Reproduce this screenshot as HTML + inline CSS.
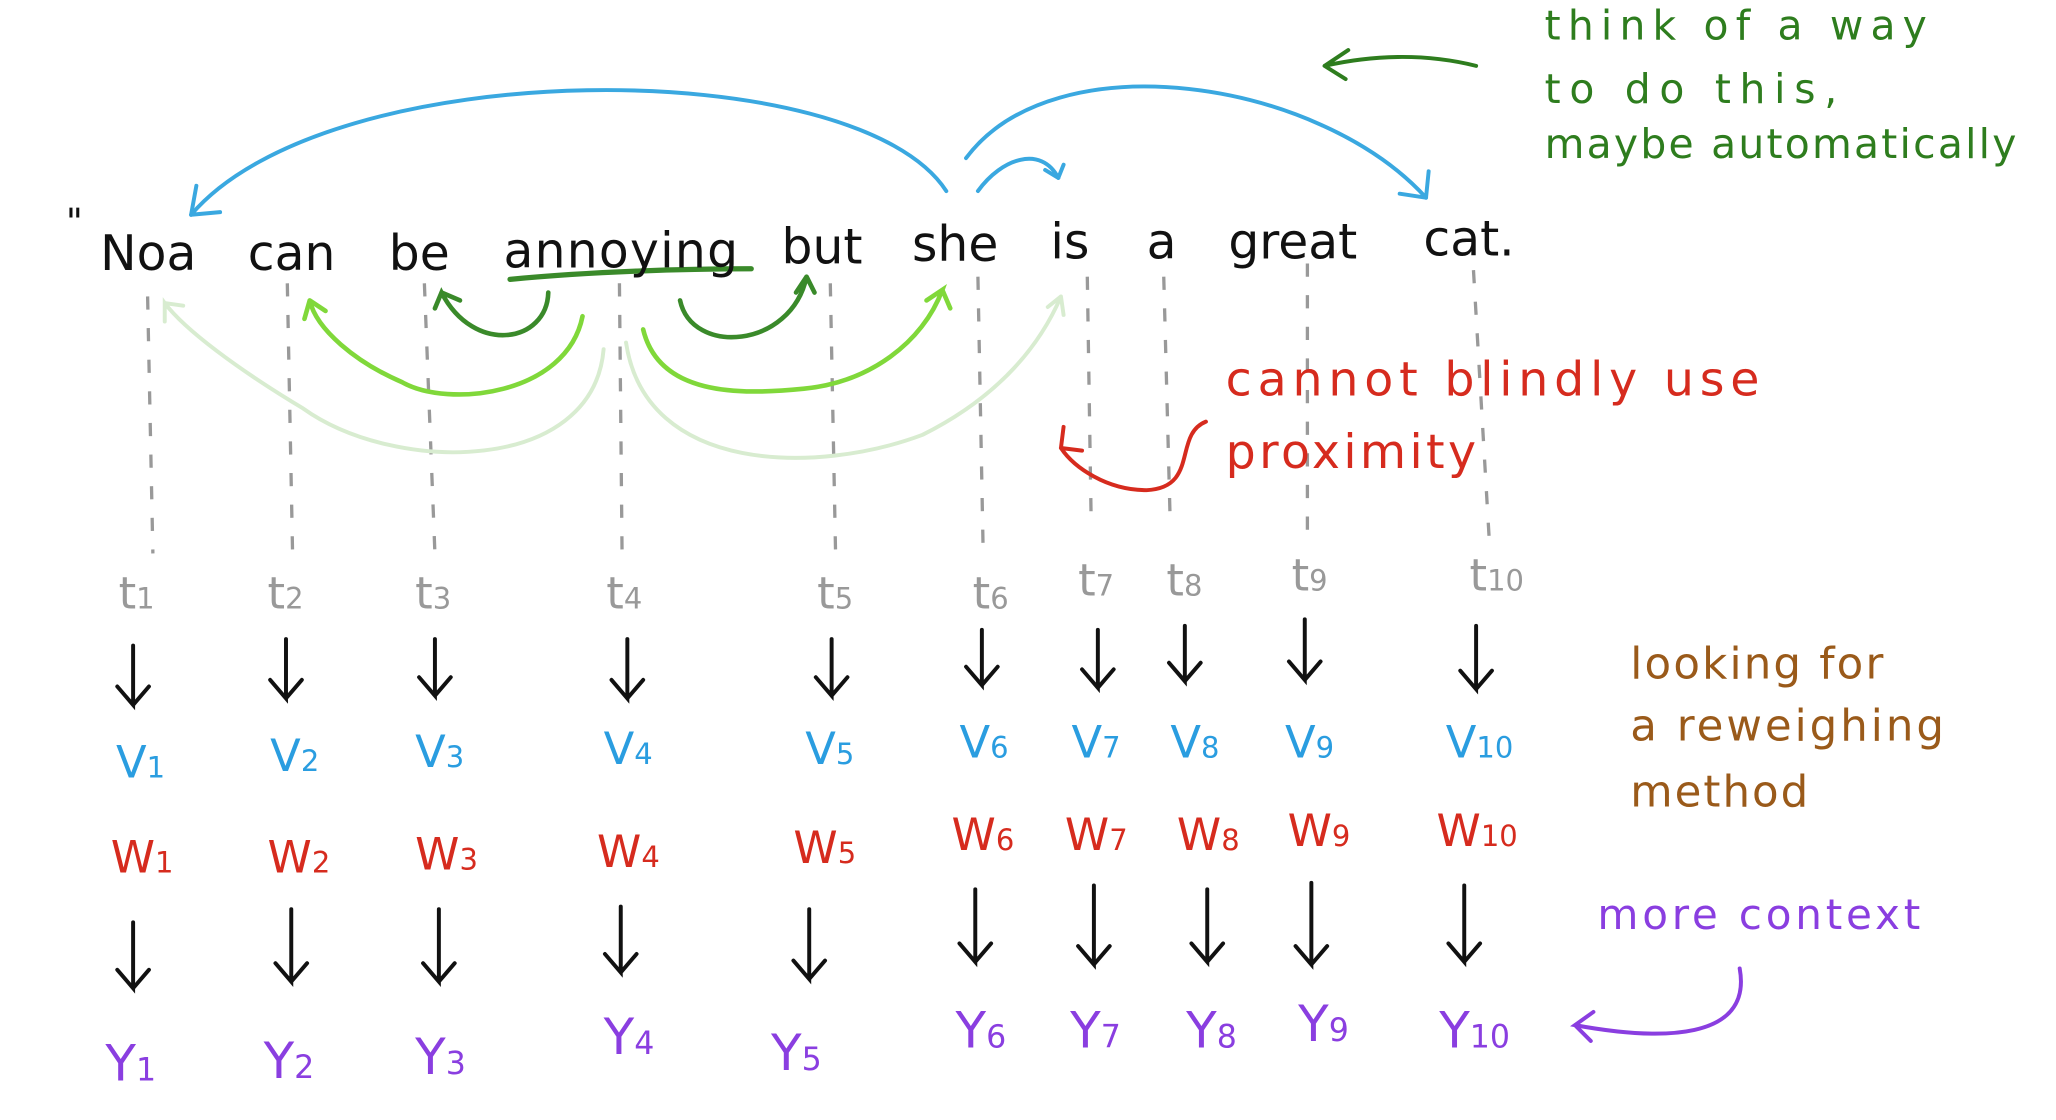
<!DOCTYPE html>
<html><head><meta charset="utf-8"><style>
html,body{margin:0;padding:0;background:#fff;width:2056px;height:1120px;overflow:hidden}
svg{display:block}
text{font-family:"DejaVu Sans","Liberation Sans",sans-serif}
</style></head><body>
<svg width="2056" height="1120" viewBox="0 0 1560 850" preserveAspectRatio="none" xmlns="http://www.w3.org/2000/svg">
<rect width="1560" height="850" fill="#fff"/>
<g stroke="#999" stroke-width="2.5" stroke-dasharray="10 14" fill="none">
<line x1="112" y1="225" x2="116" y2="420"/>
<line x1="218" y1="215" x2="222" y2="420"/>
<line x1="322" y1="215" x2="330" y2="420"/>
<line x1="470" y1="215" x2="472" y2="420"/>
<line x1="630" y1="215" x2="634" y2="420"/>
<line x1="742" y1="210" x2="746" y2="420"/>
<line x1="825" y1="210" x2="828" y2="400"/>
<line x1="883" y1="210" x2="888" y2="400"/>
<line x1="992" y1="200" x2="992" y2="410"/>
<line x1="1118" y1="205" x2="1130" y2="410"/>
</g>
<g stroke="#3aa8e0" stroke-width="3" fill="none" stroke-linecap="round">
<path d="M718 145 C650 40 250 40 145 163"/><path d="M145 163 l22 -2 M145 163 l4 -22"/>
<path d="M733 120 C800 30 1000 60 1082 150"/><path d="M1082 150 l-20 -3 M1082 150 l2 -20"/>
<path d="M742 145 C760 120 790 110 803 135"/><path d="M803 135 l-10 -6 M803 135 l4 -10"/>
</g>
<g stroke="#2e7d1e" stroke-width="3" fill="none" stroke-linecap="round">
<path d="M1120 50 C1080 40 1040 42 1005 50 l18 -12 M1005 50 l16 10"/>
</g>
<g fill="none" stroke-linecap="round">
<path d="M387 212 C450 206 520 204 570 204" stroke="#3a8a2a" stroke-width="4"/>
<path d="M416 222 C415 260 360 270 335 222 l-5 12 M335 222 l14 6" stroke="#3a8a2a" stroke-width="3.5"/>
<path d="M516 228 C525 270 600 265 612 210 l-8 12 M612 210 l6 12" stroke="#3a8a2a" stroke-width="3.5"/>
<path d="M442 240 C430 300 340 310 305 290 C270 275 240 250 235 228 l-4 14 M235 228 l12 8" stroke="#80d83a" stroke-width="3.5"/>
<path d="M488 250 C500 300 560 300 610 295 C660 290 700 260 715 220 l-12 8 M715 220 l6 14" stroke="#80d83a" stroke-width="3.5"/>
<path d="M458 265 C450 360 300 360 230 310 C180 280 140 250 125 230 l0 14 M125 230 l14 2" stroke="#d8ecd0" stroke-width="3"/>
<path d="M475 260 C490 360 620 360 700 330 C760 300 790 260 805 225 l-10 8 M805 225 l2 14" stroke="#d8ecd0" stroke-width="3"/>
</g>
<path d="M915 320 C890 330 910 370 870 372 C840 372 815 355 805 340 M805 340 l2 -16 M805 340 l16 2" stroke="#d62b1e" stroke-width="3" fill="none" stroke-linecap="round"/>
<path d="M1320 735 C1330 790 1260 790 1195 778 l14 -10 M1195 778 l12 12" stroke="#8a3ee0" stroke-width="3" fill="none" stroke-linecap="round"/>
<g font-size="37" fill="#111">
<text x="50" y="178" font-size="28">"</text>
<text x="76" y="205">Noa</text><text x="188" y="205">can</text><text x="295" y="205">be</text>
<text x="382" y="203" textLength="178">annoying</text><text x="593" y="200">but</text><text x="692" y="198">she</text>
<text x="797" y="196">is</text><text x="870" y="196">a</text><text x="932" y="196">great</text><text x="1080" y="194">cat.</text>
</g>
<g font-size="31" fill="#2e7d1e">
<text x="1172" y="30" textLength="290">think  of  a  way</text><text x="1172" y="78" textLength="222">to  do  this,</text><text x="1172" y="120" textLength="358">maybe automatically</text>
</g>
<g font-size="36" fill="#d62b1e"><text x="930" y="300" textLength="405">cannot  blindly  use</text><text x="930" y="355" textLength="190">proximity</text></g>
<g font-size="33" fill="#9a5a1a"><text x="1237" y="515" textLength="192">looking  for</text><text x="1237" y="562" textLength="238">a  reweighing</text><text x="1237" y="612" textLength="135">method</text></g>
<text x="1212" y="705" font-size="32" fill="#8a3ee0" textLength="245">more  context</text>
<g font-size="34" fill="#999">
<text x="90" y="462">t<tspan font-size="22">1</tspan></text><text x="203" y="462">t<tspan font-size="22">2</tspan></text>
<text x="315" y="462">t<tspan font-size="22">3</tspan></text><text x="460" y="462">t<tspan font-size="22">4</tspan></text>
<text x="620" y="462">t<tspan font-size="22">5</tspan></text><text x="738" y="462">t<tspan font-size="22">6</tspan></text>
<text x="818" y="452">t<tspan font-size="22">7</tspan></text><text x="885" y="452">t<tspan font-size="22">8</tspan></text>
<text x="980" y="448">t<tspan font-size="22">9</tspan></text><text x="1115" y="448">t<tspan font-size="22">10</tspan></text>
</g>
<g stroke="#111" stroke-width="3" fill="none" stroke-linecap="round">
<path d="M101 490 v45 l-12 -14 M101 535 l12 -14"/><path d="M217 485 v45 l-12 -14 M217 530 l12 -14"/>
<path d="M330 485 v43 l-12 -14 M330 528 l12 -14"/><path d="M476 485 v45 l-12 -14 M476 530 l12 -14"/>
<path d="M631 485 v43 l-12 -14 M631 528 l12 -14"/><path d="M745 478 v42 l-12 -14 M745 520 l12 -14"/>
<path d="M833 478 v44 l-12 -14 M833 522 l12 -14"/><path d="M899 475 v42 l-12 -14 M899 517 l12 -14"/>
<path d="M990 470 v46 l-12 -14 M990 516 l12 -14"/><path d="M1120 475 v48 l-12 -14 M1120 523 l12 -14"/>
<path d="M101 700 v50 l-12 -14 M101 750 l12 -14"/><path d="M221 690 v55 l-12 -14 M221 745 l12 -14"/>
<path d="M333 690 v55 l-12 -14 M333 745 l12 -14"/><path d="M471 688 v50 l-12 -14 M471 738 l12 -14"/>
<path d="M614 690 v53 l-12 -14 M614 743 l12 -14"/><path d="M740 675 v55 l-12 -14 M740 730 l12 -14"/>
<path d="M830 672 v60 l-12 -14 M830 732 l12 -14"/><path d="M916 675 v55 l-12 -14 M916 730 l12 -14"/>
<path d="M995 670 v62 l-12 -14 M995 732 l12 -14"/><path d="M1111 672 v58 l-12 -14 M1111 730 l12 -14"/>
</g>
<g font-size="34" fill="#2a9de0">
<text x="88" y="590">V<tspan font-size="22">1</tspan></text><text x="205" y="585">V<tspan font-size="22">2</tspan></text>
<text x="315" y="582">V<tspan font-size="22">3</tspan></text><text x="458" y="580">V<tspan font-size="22">4</tspan></text>
<text x="611" y="580">V<tspan font-size="22">5</tspan></text><text x="728" y="575">V<tspan font-size="22">6</tspan></text>
<text x="813" y="575">V<tspan font-size="22">7</tspan></text><text x="888" y="575">V<tspan font-size="22">8</tspan></text>
<text x="975" y="575">V<tspan font-size="22">9</tspan></text><text x="1097" y="575">V<tspan font-size="22">10</tspan></text>
</g>
<g font-size="34" fill="#d62b1e">
<text x="84" y="662">W<tspan font-size="22">1</tspan></text><text x="203" y="662">W<tspan font-size="22">2</tspan></text>
<text x="315" y="660">W<tspan font-size="22">3</tspan></text><text x="453" y="658">W<tspan font-size="22">4</tspan></text>
<text x="602" y="655">W<tspan font-size="22">5</tspan></text><text x="722" y="645">W<tspan font-size="22">6</tspan></text>
<text x="808" y="645">W<tspan font-size="22">7</tspan></text><text x="893" y="645">W<tspan font-size="22">8</tspan></text>
<text x="977" y="642">W<tspan font-size="22">9</tspan></text><text x="1090" y="642">W<tspan font-size="22">10</tspan></text>
</g>
<g font-size="38" fill="#8a3ee0">
<text x="80" y="820">Y<tspan font-size="24">1</tspan></text><text x="200" y="818">Y<tspan font-size="24">2</tspan></text>
<text x="315" y="815">Y<tspan font-size="24">3</tspan></text><text x="458" y="800">Y<tspan font-size="24">4</tspan></text>
<text x="585" y="812">Y<tspan font-size="24">5</tspan></text><text x="725" y="795">Y<tspan font-size="24">6</tspan></text>
<text x="812" y="795">Y<tspan font-size="24">7</tspan></text><text x="900" y="795">Y<tspan font-size="24">8</tspan></text>
<text x="985" y="790">Y<tspan font-size="24">9</tspan></text><text x="1092" y="795">Y<tspan font-size="24">10</tspan></text>
</g>
</svg>
</body></html>
